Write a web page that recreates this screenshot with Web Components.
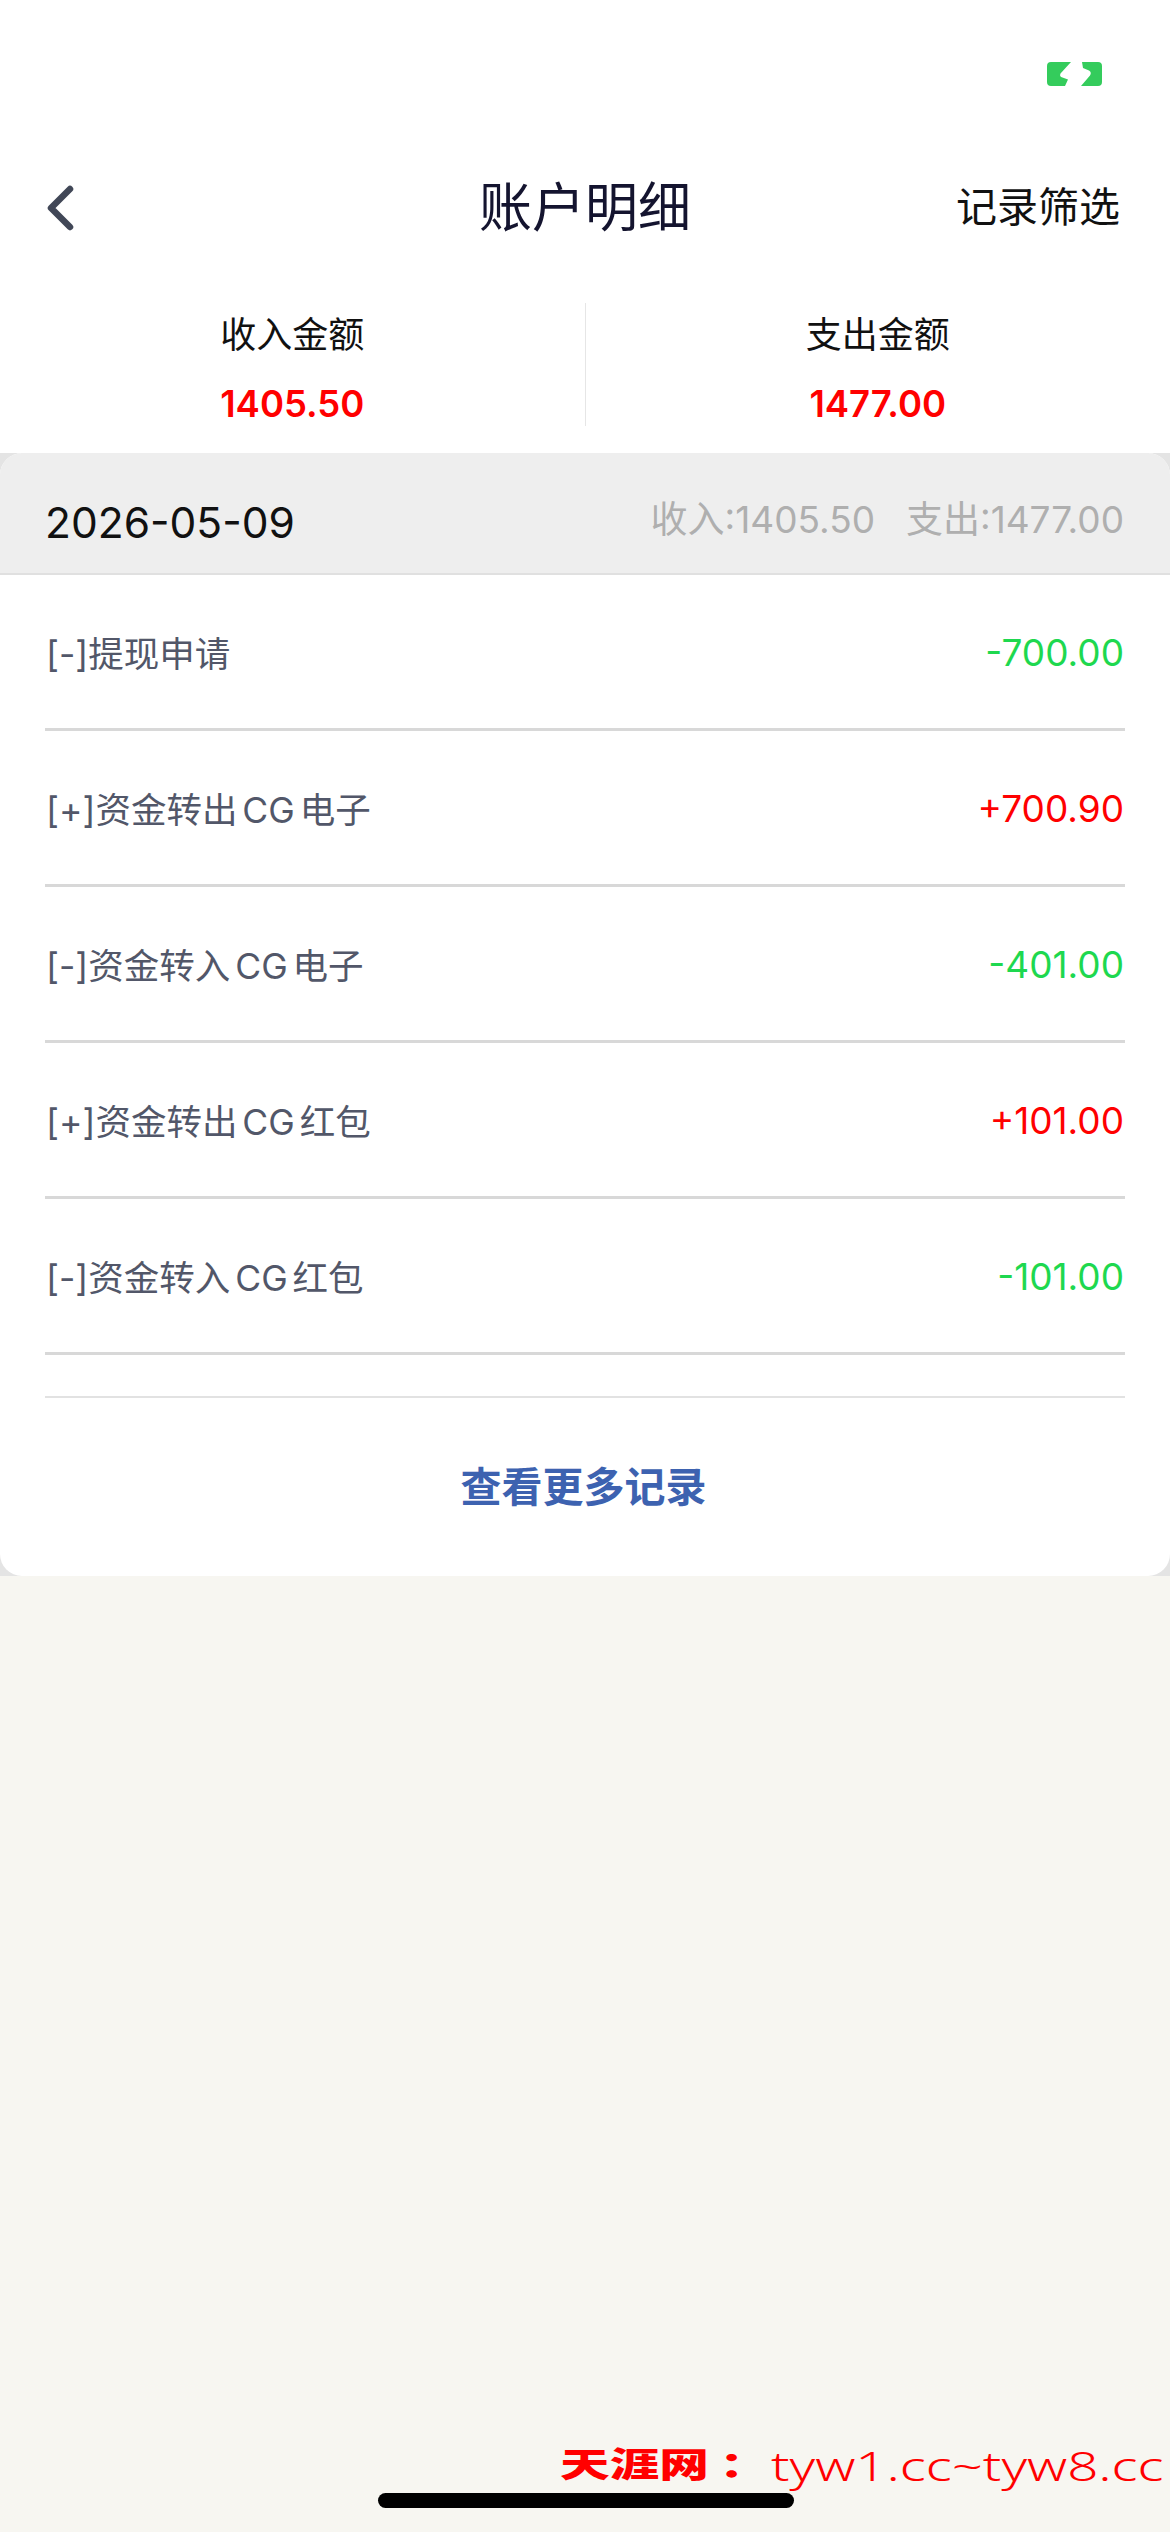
<!DOCTYPE html>
<html lang="zh-CN">
<head>
<meta charset="utf-8">
<title>账户明细</title>
<style>
  html, body { margin: 0; padding: 0; }
  body { width: 1170px; height: 2532px; overflow: hidden; font-family: Inter, "Noto Sans CJK SC", sans-serif; }
</style>
</head>
<body>
<account-page>
  <status-bar slot="top"></status-bar>
  <nav-bar slot="top" action="记录筛选">账户明细</nav-bar>
  <summary-bar slot="top" income="1405.50" expense="1477.00"></summary-bar>
  <record-card date="2026-05-09" income="1405.50" expense="1477.00">
    <record-row amount="-700.00" kind="out">[-]提现申请</record-row>
    <record-row amount="+700.90" kind="in">[+]资金转出 CG 电子</record-row>
    <record-row amount="-401.00" kind="out">[-]资金转入 CG 电子</record-row>
    <record-row amount="+101.00" kind="in">[+]资金转出 CG 红包</record-row>
    <record-row amount="-101.00" kind="out">[-]资金转入 CG 红包</record-row>
  </record-card>
  <site-mark slot="over"></site-mark>
</account-page>

<script>
const CJK = `Inter, "Noto Sans CJK SC", sans-serif`

class AccountPage extends HTMLElement {
  constructor() {
    super()
    this.attachShadow({ mode: 'open' })
    this.shadowRoot.innerHTML = `
      <style>
        :host { display: block; position: relative; width: 1170px; height: 2532px; background: #f7f6f1; overflow: hidden; }
        .top { background: #fff; }
      </style>
      <div class="top"><slot name="top"></slot></div>
      <slot></slot>
      <slot name="over"></slot>`
  }
}
customElements.define('account-page', AccountPage)

class StatusBar extends HTMLElement {
  constructor() {
    super()
    this.attachShadow({ mode: 'open' })
    this.shadowRoot.innerHTML = `
      <style>
        :host { display: flex; justify-content: flex-end; height: 157px; padding: 62px 68px 0 0; box-sizing: border-box; }
        svg { display: block; }
      </style>
      <svg width="55" height="24" viewBox="0 0 55 24">
        <path fill="#34cc5c" d="M4 0H24L13.500 11.500Q12 14.500 15.500 15.500L21 17.500L18 24H4Q0 24 0 20V4Q0 0 4 0Z"/>
        <path fill="#34cc5c" d="M35 0H51Q55 0 55 4V20Q55 24 51 24H34L43 13.500Q45 10.500 42 8.500L36 6Z"/>
      </svg>`
  }
}
customElements.define('status-bar', StatusBar)

class NavBar extends HTMLElement {
  constructor() {
    super()
    this.attachShadow({ mode: 'open' })
    this.shadowRoot.innerHTML = `
      <style>
        :host { display: grid; grid-template-columns: 1fr auto 1fr; align-items: center; height: 98px; padding: 0 46px; font-family: ${CJK}; }
        svg { display: block; margin-top: 4px; }
        .title { font-size: 53px; color: #14142f; margin-bottom: 4px; }
        .action { justify-self: end; font-size: 41px; color: #111; margin: 0 4px 4px 0; }
      </style>
      <svg width="28" height="46" viewBox="0 0 28 46" fill="none" stroke="#414757" stroke-width="6.500" stroke-linecap="round" stroke-linejoin="round">
        <path d="M24 4L5 23L24 42"/>
      </svg>
      <div class="title"><slot></slot></div>
      <div class="action"></div>`
    this.shadowRoot.querySelector('.action').textContent = this.getAttribute('action')
  }
}
customElements.define('nav-bar', NavBar)

class SummaryBar extends HTMLElement {
  constructor() {
    super()
    this.attachShadow({ mode: 'open' })
    this.shadowRoot.innerHTML = `
      <style>
        :host { display: grid; grid-template-columns: 1fr 1px 1fr; height: 198px; padding: 48px 0 30px; box-sizing: border-box; font-family: ${CJK}; }
        .cell { display: flex; flex-direction: column; align-items: center; gap: 23px; padding-top: 8px; }
        .cell span { font-size: 36px; line-height: 48px; color: #111; }
        .cell b { font-size: 36.500px; line-height: 44px; font-weight: 600; color: #ff0000; }
        .line { background: #e6e6e6; }
      </style>
      <div class="cell"><span>收入金额</span><b id="in"></b></div>
      <div class="line"></div>
      <div class="cell"><span>支出金额</span><b id="out"></b></div>`
    this.shadowRoot.getElementById('in').textContent = this.getAttribute('income')
    this.shadowRoot.getElementById('out').textContent = this.getAttribute('expense')
  }
}
customElements.define('summary-bar', SummaryBar)

class RecordCard extends HTMLElement {
  constructor() {
    super()
    this.attachShadow({ mode: 'open' })
    this.shadowRoot.innerHTML = `
      <style>
        :host { display: block; height: 1123px; background: #e4e4e4; font-family: ${CJK}; }
        .card { height: 100%; background: #fff; border-radius: 22px; overflow: hidden; box-sizing: border-box; display: flex; flex-direction: column; }
        .head { display: flex; justify-content: space-between; align-items: center; height: 122px; flex: none; padding: 0 46px 0 45px; box-sizing: border-box; background: #eee; border-bottom: 2px solid #e0e0e0; }
        .date { font-size: 42.500px; color: #111; margin-top: 18px; }
        .sum { display: flex; gap: 31px; font-size: 37px; color: #afafaf; margin-top: 8px; }
        .list { padding: 0 45px; }
        .more { margin: 41px 45px 0; border-top: 2px solid #e2e2e2; height: 171px; padding-right: 3px; display: flex; align-items: center; justify-content: center; font-size: 41px; font-weight: 700; color: #3d62b0; }
      </style>
      <div class="card">
        <div class="head">
          <div class="date"></div>
          <div class="sum"><span id="in"></span><span id="out"></span></div>
        </div>
        <div class="list"><slot></slot></div>
        <div class="more">查看更多记录</div>
      </div>`
    this.shadowRoot.querySelector('.date').textContent = this.getAttribute('date')
    this.shadowRoot.getElementById('in').textContent = '收入:' + this.getAttribute('income')
    this.shadowRoot.getElementById('out').textContent = '支出:' + this.getAttribute('expense')
  }
}
customElements.define('record-card', RecordCard)

class RecordRow extends HTMLElement {
  constructor() {
    super()
    this.attachShadow({ mode: 'open' })
    this.shadowRoot.innerHTML = `
      <style>
        :host { display: flex; justify-content: space-between; align-items: center; height: 156px; box-sizing: border-box; padding: 0 1px 0 1px; border-bottom: 3px solid #d8d8d8; color: #525769; font-size: 35.500px; word-spacing: -5px; }
        .amount { font-size: 37px; word-spacing: 0; margin-top: 2px; }
        :host([kind="out"]) .amount { color: #1ed84f; }
        :host([kind="in"]) .amount { color: #ff0000; }
      </style>
      <div><slot></slot></div>
      <div class="amount"></div>`
    this.shadowRoot.querySelector('.amount').textContent = this.getAttribute('amount')
  }
}
customElements.define('record-row', RecordRow)

class SiteMark extends HTMLElement {
  constructor() {
    super()
    this.attachShadow({ mode: 'open' })
    this.shadowRoot.innerHTML = `
      <style>
        .mark { position: absolute; left: 560px; top: 2437px; height: 56px; display: flex; align-items: center; color: #ff0000; white-space: nowrap; }
        .cn { display: block; width: 211px; font-family: "Noto Sans CJK SC", sans-serif; font-weight: 900; font-size: 34px; transform: scaleX(1.46); transform-origin: left center; margin-top: -6px; }
        .cn i { font-style: normal; margin-left: 7px; }
        .url { display: block; font-family: "Noto Sans", sans-serif; font-weight: 300; font-size: 40px; transform: scaleX(1.364); transform-origin: left center; }
        .home { position: absolute; left: 378px; top: 2493px; width: 416px; height: 15px; border-radius: 8px; background: #000; }
      </style>
      <div class="mark"><span class="cn">天涯网<i>：</i></span><span class="url">tyw1.cc~tyw8.cc</span></div>
      <div class="home"></div>`
  }
}
customElements.define('site-mark', SiteMark)
</script>
</body>
</html>
